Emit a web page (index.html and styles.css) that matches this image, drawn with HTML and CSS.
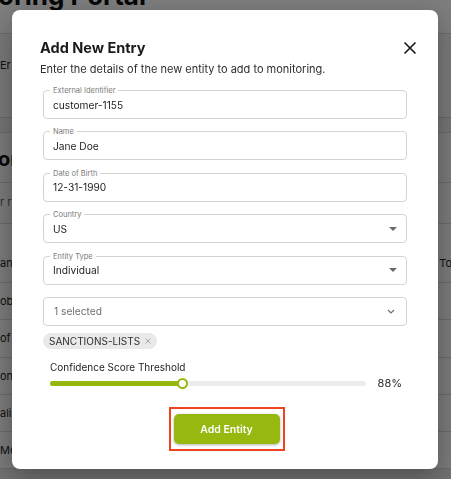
FILE: index.html
```html
<!DOCTYPE html>
<html lang="en">
<head>
<meta charset="utf-8">
<title>Add New Entry</title>
<link rel="stylesheet" href="styles.css">
</head>
<body>
<div class="page">
  <header class="top"><h1 class="page-title">oring Portal</h1></header>
  <div class="tabs"><span class="frag">Er</span></div>
  <div class="strip"></div>
  <section class="list-head"><h2 class="list-title">or</h2></section>
  <div class="search"><span class="frag muted">r r</span></div>
  <div class="table">
    <div class="trow thead"><span class="frag">an</span><span class="frag right">To</span></div>
    <div class="trow"><span class="frag">ob</span></div>
    <div class="trow"><span class="frag">of</span></div>
    <div class="trow"><span class="frag">on</span></div>
    <div class="trow"><span class="frag">ali</span></div>
    <div class="trow"><span class="frag">Mor</span></div>
  </div>
</div>

<div class="overlay"></div>

<div class="modal" role="dialog" aria-labelledby="dlg-title">
  <div class="modal-head">
    <h2 id="dlg-title" class="modal-title">Add New Entry</h2>
    <button class="close" aria-label="Close">
      <svg width="12" height="12" viewBox="0 0 12 12"><path d="M1 1 L11 11 M11 1 L1 11" stroke="#1a1a1a" stroke-width="1.7" stroke-linecap="round"/></svg>
    </button>
  </div>
  <p class="modal-sub">Enter the details of the new entity to add to monitoring.</p>

  <div class="form">
    <div class="field"><span class="label">External Identifier</span><span class="value">customer-1155</span></div>
    <div class="field"><span class="label">Name</span><span class="value">Jane Doe</span></div>
    <div class="field"><span class="label">Date of Birth</span><span class="value">12-31-1990</span></div>
    <div class="field select"><span class="label">Country</span><span class="value">US</span><span class="caret"></span></div>
    <div class="field select"><span class="label">Entity Type</span><span class="value">Individual</span><span class="caret"></span></div>
    <div class="field multi"><span class="value placeholder">1 selected</span>
      <svg class="chev" width="8" height="5" viewBox="0 0 8 5"><path d="M1 1 L4 4 L7 1" fill="none" stroke="#6e6e6e" stroke-width="1.2"/></svg>
    </div>
    <div class="chips">
      <span class="chip">SANCTIONS-LISTS
        <svg class="chip-x" width="6" height="6" viewBox="0 0 6 6"><path d="M0.5 0.5 L5.5 5.5 M5.5 0.5 L0.5 5.5" stroke="#a8a8a8" stroke-width="1"/></svg>
      </span>
    </div>

    <div class="slider-block">
      <div class="slider-label">Confidence Score Threshold</div>
      <div class="slider-row">
        <div class="track"><div class="fill" style="width: 42%"></div><span class="thumb" style="left: 42%"></span></div>
        <span class="pct">88%</span>
      </div>
    </div>

    <div class="actions">
      <div class="highlight"><button class="primary">Add Entity</button></div>
    </div>
  </div>
</div>
</body>
</html>
```

FILE: styles.css
```css
* { box-sizing: border-box; }
html, body { margin: 0; padding: 0; }
body {
  font-family: Inter, "Noto Sans", "Liberation Sans", sans-serif;
  background: #e2e2e2;
  width: 451px;
  height: 479px;
  overflow: hidden;
  color: #111;
}

/* background page (dimmed) */
.page { width: 451px; }
.top {
  display: flow-root;
  height: 34px;
  background: #fbfbfb;
  border-bottom: 1px solid #d8d8d8;
}
.page-title {
  margin: -17px 0 0 -2px;
  font-size: 26px;
  line-height: 26px;
  font-weight: 700;
  color: #0e0e0e;
  white-space: nowrap;
}
.frag { font-size: 11px; line-height: 14px; color: #222; white-space: nowrap; }
.muted { color: #666; }
.right { margin-right: -1px; }
.tabs {
  height: 84px;
  padding-top: 19px;
  background: #f1f1f1;
  border-bottom: 1px solid #cfcfcf;
}
.strip { height: 15px; border-bottom: 1px solid #cfcfcf; background: #e8e8e8; }
.list-head {
  height: 50px;
  padding-top: 14px;
  background: #f2f2f2;
  border-bottom: 1px solid #cfcfcf;
}
.list-title { margin: 0 0 0 -2px; font-size: 20px; line-height: 24px; font-weight: 700; color: #111; }
.search { height: 40px; padding-top: 7px; background: #f2f2f2; }
.table { background: #f4f4f4; }
.trow {
  height: 37.3px;
  display: flex;
  align-items: center;
  justify-content: space-between;
  border-bottom: 1px solid #d2d2d2;
}
.thead { height: 60px; padding-top: 32px; align-items: flex-start; border-top: 1px solid #d2d2d2; }

.overlay {
  position: fixed;
  inset: 0;
  background: rgba(0, 0, 0, 0.5);
}

/* modal */
.modal {
  position: fixed;
  left: 12px;
  top: 10px;
  width: 426px;
  height: 459px;
  background: #fff;
  border-radius: 8px;
  box-shadow: 0 8px 24px rgba(0, 0, 0, 0.3);
  padding: 28px 31px 0 28px;
}
.modal-head {
  display: flex;
  align-items: center;
  justify-content: space-between;
  height: 20px;
  margin-right: -9px;
}
.modal-title {
  margin: 0;
  font-size: 14.5px;
  line-height: 20px;
  font-weight: 700;
  color: #1b1b1b;
}
.close {
  border: 0;
  background: none;
  padding: 0;
  width: 12px;
  height: 12px;
  display: flex;
}
.modal-sub {
  margin: 4px 0 0;
  font-size: 11px;
  line-height: 14px;
  color: #2e2e2e;
}

.form {
  margin-top: 14px;
  padding-left: 3px;
  display: flex;
  flex-direction: column;
}
.field {
  position: relative;
  height: 29px;
  border: 1px solid #d3d3d3;
  border-radius: 4px;
  display: flex;
  align-items: center;
  padding: 0 9px;
  margin-bottom: 12.4px;
}
.label {
  position: absolute;
  top: -5px;
  left: 6px;
  padding: 0 3px;
  background: #fff;
  font-size: 7.5px;
  line-height: 9px;
  color: #7a7a7a;
}
.value {
  flex: 1;
  font-size: 10.2px;
  color: #1e1e1e;
}
.placeholder { color: #6f6f6f; padding-left: 1px; }
.caret {
  width: 0;
  height: 0;
  border-left: 4px solid transparent;
  border-right: 4px solid transparent;
  border-top: 4px solid #6a6a6a;
}
.chev { margin-right: 2px; }
.field.multi { margin-bottom: 0; }

.chips { margin-top: 7px; display: flex; }
.chip {
  height: 16px;
  display: inline-flex;
  align-items: center;
  gap: 5px;
  padding: 0 6px;
  background: #e9e9e9;
  border-radius: 8px;
  font-size: 10px;
  color: #2f2f2f;
}

.slider-block { margin-top: 12px; padding-left: 7px; padding-right: 5px; }
.slider-label { font-size: 10px; line-height: 13px; color: #222; }
.slider-row {
  margin-top: 2.5px;
  height: 14px;
  display: flex;
  align-items: center;
  gap: 12px;
}
.track {
  position: relative;
  flex: 1;
  height: 5px;
  background: #ececec;
  border-radius: 3px;
}
.fill {
  height: 100%;
  background: #95b80e;
  border-radius: 3px;
}
.thumb {
  position: absolute;
  top: 50%;
  width: 11px;
  height: 11px;
  margin: -5.5px 0 0 -5.5px;
  border-radius: 50%;
  background: #fff;
  border: 2px solid #95b80e;
}
.pct { font-size: 11px; color: #2a2a2a; }

.actions { margin-top: 17px; display: flex; justify-content: center; margin-right: -3px; }
.highlight {
  border: 2px solid #f0421f;
  padding: 5px 3px;
}
.primary {
  width: 106px;
  height: 30px;
  border: 0;
  border-radius: 5px;
  background: #96b80f;
  color: #fff;
  font-family: Inter, "Noto Sans", sans-serif;
  font-size: 10.5px;
  font-weight: 600;
  box-shadow: 0 1px 3px rgba(0, 0, 0, 0.3);
  display: block;
}
```
